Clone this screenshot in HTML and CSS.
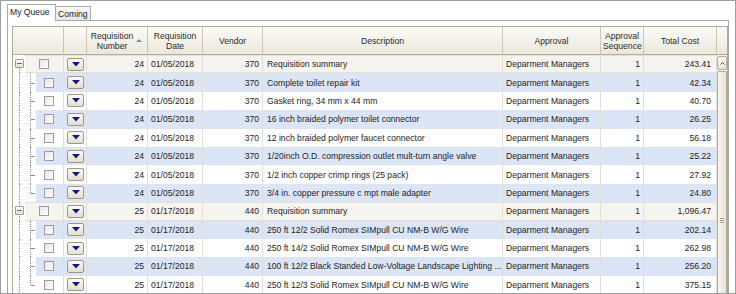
FILE: index.html
```html
<!DOCTYPE html>
<html lang="en">
<head>
  <meta charset="UTF-8" />
  <title>My Queue</title>
  <link rel="stylesheet" href="styles.css">
</head>
<body>
  <div class="frame">
    <!-- Tabs -->
    <div class="tabs">
      <div class="tab active">My Queue</div>
      <div class="tab">Coming</div>
    </div>

    <!-- Queue grid -->
    <div class="panel">
      <div class="grid">
        <table>
          <colgroup>
            <col style="width:51px"><col style="width:23px"><col style="width:61px">
            <col style="width:55px"><col style="width:60px"><col style="width:240px">
            <col style="width:98px"><col style="width:43px"><col style="width:73px">
          </colgroup>
          <thead>
            <tr>
              <th></th>
              <th></th>
              <th class="sorted">Requisition<br>Number<i class="sort-arrow"></i></th>
              <th>Requisition<br>Date</th>
              <th>Vendor</th>
              <th>Description</th>
              <th>Approval</th>
              <th>Approval<br>Sequence</th>
              <th>Total Cost</th>
            </tr>
          </thead>
          <tbody>
            <tr class="group first">
              <td class="tree"><i class="vl"></i><span class="exp"><i></i></span><div class="lead"><span class="chk"></span></div></td>
              <td class="drop"><span class="dd"><svg width="8" height="5" viewBox="0 0 8 5"><polygon points="0,0 8,0 4,4.5" fill="#16168a"/></svg></span></td>
              <td class="num">24</td><td>01/05/2018</td><td class="num">370</td>
              <td class="desc">Requisition summary</td><td>Deparment Managers</td><td class="num">1</td><td class="num cost">243.41</td>
            </tr>
            <tr class="alt">
              <td class="tree"><i class="vl"></i><i class="br"></i><div class="lead"><span class="chk"></span></div></td>
              <td class="drop"><span class="dd"><svg width="8" height="5" viewBox="0 0 8 5"><polygon points="0,0 8,0 4,4.5" fill="#16168a"/></svg></span></td>
              <td class="num">24</td><td>01/05/2018</td><td class="num">370</td>
              <td class="desc">Complete toilet repair kit</td><td>Deparment Managers</td><td class="num">1</td><td class="num cost">42.34</td>
            </tr>
            <tr>
              <td class="tree"><i class="vl"></i><i class="br"></i><div class="lead"><span class="chk"></span></div></td>
              <td class="drop"><span class="dd"><svg width="8" height="5" viewBox="0 0 8 5"><polygon points="0,0 8,0 4,4.5" fill="#16168a"/></svg></span></td>
              <td class="num">24</td><td>01/05/2018</td><td class="num">370</td>
              <td class="desc">Gasket ring, 34 mm x 44 mm</td><td>Deparment Managers</td><td class="num">1</td><td class="num cost">40.70</td>
            </tr>
            <tr class="alt">
              <td class="tree"><i class="vl"></i><i class="br"></i><div class="lead"><span class="chk"></span></div></td>
              <td class="drop"><span class="dd"><svg width="8" height="5" viewBox="0 0 8 5"><polygon points="0,0 8,0 4,4.5" fill="#16168a"/></svg></span></td>
              <td class="num">24</td><td>01/05/2018</td><td class="num">370</td>
              <td class="desc">16 inch braided polymer toilet connector</td><td>Deparment Managers</td><td class="num">1</td><td class="num cost">26.25</td>
            </tr>
            <tr>
              <td class="tree"><i class="vl"></i><i class="br"></i><div class="lead"><span class="chk"></span></div></td>
              <td class="drop"><span class="dd"><svg width="8" height="5" viewBox="0 0 8 5"><polygon points="0,0 8,0 4,4.5" fill="#16168a"/></svg></span></td>
              <td class="num">24</td><td>01/05/2018</td><td class="num">370</td>
              <td class="desc">12 inch braided polymer faucet connector</td><td>Deparment Managers</td><td class="num">1</td><td class="num cost">56.18</td>
            </tr>
            <tr class="alt">
              <td class="tree"><i class="vl"></i><i class="br"></i><div class="lead"><span class="chk"></span></div></td>
              <td class="drop"><span class="dd"><svg width="8" height="5" viewBox="0 0 8 5"><polygon points="0,0 8,0 4,4.5" fill="#16168a"/></svg></span></td>
              <td class="num">24</td><td>01/05/2018</td><td class="num">370</td>
              <td class="desc">1/20inch O.D. compression outlet mult-turn angle valve</td><td>Deparment Managers</td><td class="num">1</td><td class="num cost">25.22</td>
            </tr>
            <tr>
              <td class="tree"><i class="vl"></i><i class="br"></i><div class="lead"><span class="chk"></span></div></td>
              <td class="drop"><span class="dd"><svg width="8" height="5" viewBox="0 0 8 5"><polygon points="0,0 8,0 4,4.5" fill="#16168a"/></svg></span></td>
              <td class="num">24</td><td>01/05/2018</td><td class="num">370</td>
              <td class="desc">1/2 inch copper crimp rings (25 pack)</td><td>Deparment Managers</td><td class="num">1</td><td class="num cost">27.92</td>
            </tr>
            <tr class="alt last">
              <td class="tree"><i class="vl"></i><i class="br"></i><div class="lead"><span class="chk"></span></div></td>
              <td class="drop"><span class="dd"><svg width="8" height="5" viewBox="0 0 8 5"><polygon points="0,0 8,0 4,4.5" fill="#16168a"/></svg></span></td>
              <td class="num">24</td><td>01/05/2018</td><td class="num">370</td>
              <td class="desc">3/4 in. copper pressure c mpt male adapter</td><td>Deparment Managers</td><td class="num">1</td><td class="num cost">24.80</td>
            </tr>
            <tr class="group">
              <td class="tree"><i class="vl"></i><span class="exp"><i></i></span><div class="lead"><span class="chk"></span></div></td>
              <td class="drop"><span class="dd"><svg width="8" height="5" viewBox="0 0 8 5"><polygon points="0,0 8,0 4,4.5" fill="#16168a"/></svg></span></td>
              <td class="num">25</td><td>01/17/2018</td><td class="num">440</td>
              <td class="desc">Requisition summary</td><td>Deparment Managers</td><td class="num">1</td><td class="num cost">1,096.47</td>
            </tr>
            <tr class="alt">
              <td class="tree"><i class="vl"></i><i class="br"></i><div class="lead"><span class="chk"></span></div></td>
              <td class="drop"><span class="dd"><svg width="8" height="5" viewBox="0 0 8 5"><polygon points="0,0 8,0 4,4.5" fill="#16168a"/></svg></span></td>
              <td class="num">25</td><td>01/17/2018</td><td class="num">440</td>
              <td class="desc">250 ft 12/2 Solid Romex SIMpull CU NM-B W/G Wire</td><td>Deparment Managers</td><td class="num">1</td><td class="num cost">202.14</td>
            </tr>
            <tr>
              <td class="tree"><i class="vl"></i><i class="br"></i><div class="lead"><span class="chk"></span></div></td>
              <td class="drop"><span class="dd"><svg width="8" height="5" viewBox="0 0 8 5"><polygon points="0,0 8,0 4,4.5" fill="#16168a"/></svg></span></td>
              <td class="num">25</td><td>01/17/2018</td><td class="num">440</td>
              <td class="desc">250 ft 14/2 Solid Romex SIMpull CU NM-B W/G Wire</td><td>Deparment Managers</td><td class="num">1</td><td class="num cost">262.98</td>
            </tr>
            <tr class="alt">
              <td class="tree"><i class="vl"></i><i class="br"></i><div class="lead"><span class="chk"></span></div></td>
              <td class="drop"><span class="dd"><svg width="8" height="5" viewBox="0 0 8 5"><polygon points="0,0 8,0 4,4.5" fill="#16168a"/></svg></span></td>
              <td class="num">25</td><td>01/17/2018</td><td class="num">440</td>
              <td class="desc">100 ft 12/2 Black Standed Low-Voltage Landscape Lighting ...</td><td>Deparment Managers</td><td class="num">1</td><td class="num cost">256.20</td>
            </tr>
            <tr class="last">
              <td class="tree"><i class="vl"></i><i class="br"></i><div class="lead"><span class="chk"></span></div></td>
              <td class="drop"><span class="dd"><svg width="8" height="5" viewBox="0 0 8 5"><polygon points="0,0 8,0 4,4.5" fill="#16168a"/></svg></span></td>
              <td class="num">25</td><td>01/17/2018</td><td class="num">440</td>
              <td class="desc">250 ft 12/3 Solid Romex SIMpull CU NM-B W/G Wire</td><td>Deparment Managers</td><td class="num">1</td><td class="num cost">375.15</td>
            </tr>
          </tbody>
        </table>

        <!-- Vertical scrollbar -->
        <div class="vscroll">
          <div class="sb-corner"></div>
          <div class="sb-up"><svg width="5" height="3" viewBox="0 0 5 3"><polyline points="0.5,2.5 2.5,0.5 4.5,2.5" fill="none" stroke="#4a4a4a" stroke-width="1"/></svg></div>
          <div class="sb-thumb"><i></i><i></i><i></i></div>
        </div>
      </div>
    </div>
  </div>
</body>
</html>
```

FILE: styles.css
```css
* { box-sizing: border-box; margin: 0; padding: 0; }
html, body {
  width: 736px;
  height: 294px;
  overflow: hidden;
  background: #fff;
  font-family: "Liberation Sans", Arial, sans-serif;
  font-size: 8.6px;
  color: #1e1e1e;
}

/* Outer frame */
.frame {
  width: 736px;
  height: 294px;
  border: 1px solid #9e9e9e;
  overflow: hidden;
}

/* Tabs */
.tabs {
  display: flex;
  align-items: flex-end;
  height: 19px;
  padding: 3px 0 0 6px;
}
.tab {
  width: 35px;
  height: 14px;
  padding: 0 0 0 2px;
  display: flex;
  align-items: center;
  border: 1px solid #aaa;
  border-left: 0;
  border-bottom: 0;
  background: linear-gradient(#fafafa, #e6e6e6);
  color: #222;
}
.tab.active {
  width: 49px;
  height: 17px;
  margin-bottom: -1px;
  padding-bottom: 2px;
  border-left: 1px solid #aaa;
  background: #fff;
  position: relative;
  z-index: 1;
}

/* Panel */
.panel {
  margin: 0 6px;
  height: 280px;
  border: 1px solid #aaa;
  border-bottom: 0;
  padding: 5px 0 0 4px;
}

/* Grid */
.grid {
  display: flex;
  align-items: stretch;
  width: 716px;
  border: 1px solid #b1a994;
}
.grid table {
  width: 704px;
  table-layout: fixed;
  border-collapse: separate;
  border-spacing: 0;
}
.grid th {
  height: 28px;
  padding: 0 2px;
  border-right: 1px solid #cec6b3;
  border-bottom: 1px solid #b7ae99;
  background: linear-gradient(#fcfbf8, #ebe7dc);
  font-weight: normal;
  line-height: 10px;
  color: #2b2b2b;
  text-align: center;
  vertical-align: middle;
}
.grid th.sorted { position: relative; padding-right: 12px; }
.sort-arrow {
  position: absolute;
  right: 5px; top: 12px;
  width: 0; height: 0;
  border-left: 3px solid transparent;
  border-right: 3px solid transparent;
  border-bottom: 3px solid #8c8c8c;
}

.grid td {
  height: 18.4px;
  padding: 0 3px;
  border-right: 1px solid #e2dfd6;
  white-space: nowrap;
  overflow: hidden;
  vertical-align: middle;
  background: #fff;
}
.grid td.num { text-align: right; }
.grid td.cost { padding-right: 5px; }
.grid td.desc { padding-left: 4px; }

/* Row colours */
.grid tr.alt td { background: #dbe5f5; }
.grid tr.group td {
  background: #f6f4ef;
  box-shadow: inset 0 1px #e4e0d5, inset 0 -1px #e4e0d5;
}
.grid tr td.tree { padding: 0; position: relative; background: #fff; box-shadow: none; }

/* Tree column */
.lead {
  height: 18.4px;
  margin-left: 23px;
  padding-left: 8px;
  display: flex;
  align-items: center;
}
.group .lead {
  margin-left: 12px;
  padding-left: 14px;
  background: #f6f4ef;
  box-shadow: inset 0 1px #e4e0d5, inset 0 -1px #e4e0d5;
}
.alt .lead { background: #dbe5f5; }

.vl {
  position: absolute;
  left: 6px; top: 0; bottom: 0;
  border-left: 1px dotted #8e8e8e;
}
.first .vl { top: 50%; }
.br {
  position: absolute;
  left: 17px; top: 0; bottom: 0;
  border-left: 1px dotted #8e8e8e;
}
.br::after {
  content: "";
  position: absolute;
  left: 0; top: 50%;
  width: 4px;
  border-top: 1px solid #8e8e8e;
}
.last .br { bottom: 50%; }
.last .br::after { top: 100%; }

.exp {
  position: absolute;
  left: 2px; top: 50%;
  margin-top: -5px;
  width: 9px; height: 9px;
  border: 1px solid #9b9b9b;
  border-radius: 1px;
  background: linear-gradient(#fff, #e4e0d4);
  display: flex;
  align-items: center;
  justify-content: center;
}
.exp i { width: 5px; height: 1px; background: #666; }

.chk {
  width: 10px; height: 10px;
  border: 1px solid #9d9d9d;
  background: linear-gradient(135deg, #e8e8e8, #fdfdfd);
}

/* Row menu button */
.grid td.drop { padding: 0 0 0 3px; }
.dd {
  width: 17px; height: 13px;
  border: 1px solid #a2967f;
  border-radius: 2px;
  background: linear-gradient(#fbfaf6, #e3ded1);
  display: flex;
  align-items: center;
  justify-content: center;
}
.dd svg { display: block; }

/* Scrollbar */
.vscroll {
  width: 10px;
  display: flex;
  flex-direction: column;
  background: #f2f0e9;
}
.sb-corner {
  height: 28px;
  flex: none;
  border-bottom: 1px solid #b7ae99;
  background: linear-gradient(#fcfbf8, #ebe7dc);
}
.sb-up {
  height: 14px;
  flex: none;
  margin: 1px 0;
  border: 1px solid #b4ab98;
  border-radius: 2px;
  background: linear-gradient(#fdfcf9, #e5e1d5);
  display: flex;
  align-items: center;
  justify-content: center;
}
.sb-up svg { display: block; }
.sb-thumb {
  flex: 1;
  border: 1px solid #b4ab98;
  border-bottom: 0;
  border-radius: 2px 2px 0 0;
  background: linear-gradient(90deg, #f8f6f1, #e7e3d7);
  display: flex;
  flex-direction: column;
  align-items: center;
  gap: 1px;
  padding-top: 146px;
}
.sb-thumb i { width: 4px; height: 1px; background: #a79f8b; }
```
